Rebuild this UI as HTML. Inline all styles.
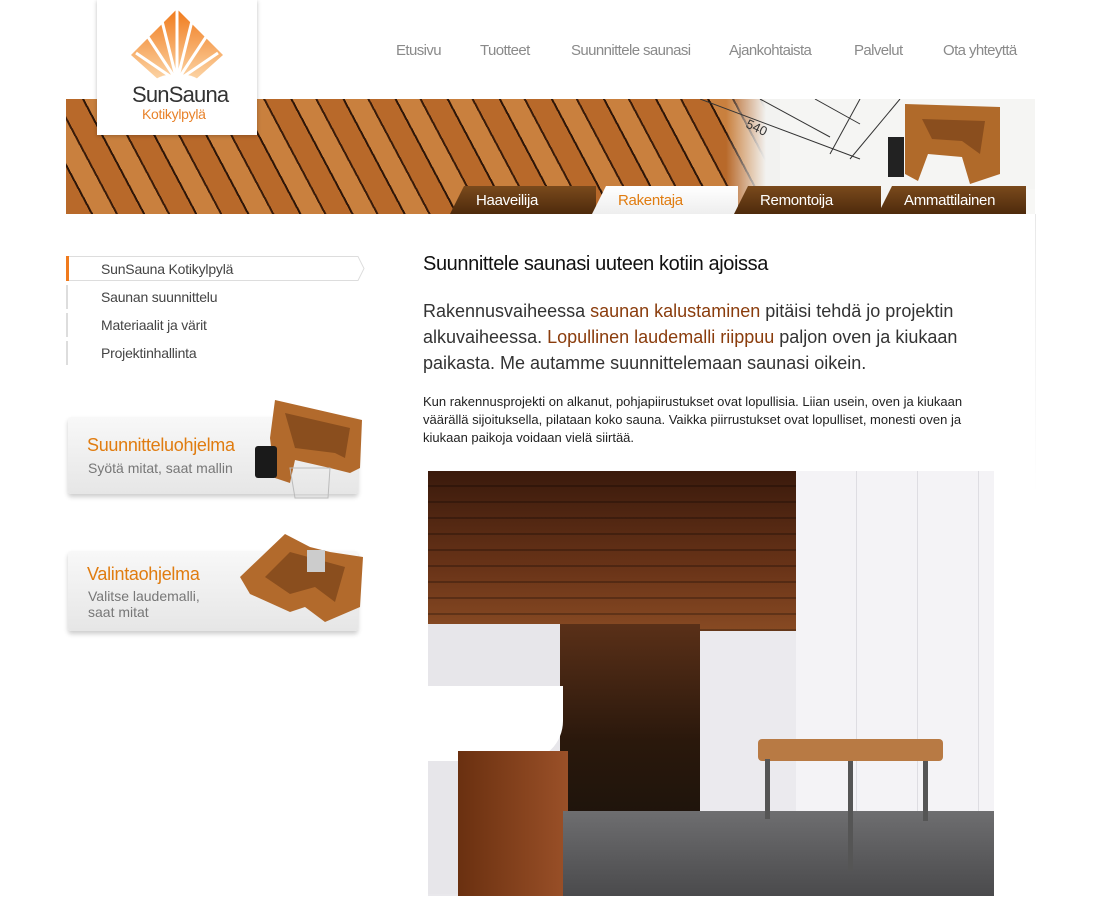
<!DOCTYPE html>
<html><head><meta charset="utf-8"><style>
*{margin:0;padding:0;box-sizing:border-box}
body{width:1093px;height:916px;background:#fff;position:relative;overflow:hidden;font-family:"Liberation Sans",sans-serif}
.abs{position:absolute}
.nav{top:42px;font-size:15px;color:#8a8a8a;letter-spacing:-0.6px}
.banner{left:66px;top:99px;width:969px;height:115px;overflow:hidden;
background:linear-gradient(90deg,rgba(0,0,0,0) 0,rgba(0,0,0,0) 660px,#f2f2f0 700px,#f7f7f5 100%),
repeating-linear-gradient(62deg,#b8692a 0 22px,#2e1608 22px 24px,#c9803e 24px 44px,#3a1c0a 44px 46px);}
.tab{top:186px;height:28px;color:#fff;font-size:15px;padding:6px 0 0 26px;letter-spacing:-0.3px;background:linear-gradient(#7a4a1c,#4e2a0c);clip-path:polygon(14px 0,100% 0,100% 100%,0 100%)}
.side{left:66px;width:2px;background:#ddd}
.si{left:101px;font-size:14px;color:#444;letter-spacing:-0.2px}
.promo{left:68px;width:290px;border-radius:3px;background:linear-gradient(#f8f8f8,#e6e6e6);box-shadow:0 3px 5px rgba(0,0,0,.2)}
</style></head><body>
<div class="abs banner"></div>
<div class="abs" style="left:780px;top:99px;width:255px;height:90px;background:#f5f5f3"></div>
<svg class="abs" style="left:700px;top:99px" width="335" height="90"><g stroke="#333" fill="none" stroke-width="1"><line x1="0" y1="0" x2="160" y2="60"/><line x1="60" y1="0" x2="130" y2="38"/><line x1="115" y1="0" x2="160" y2="25"/><line x1="160" y1="0" x2="130" y2="55"/><line x1="200" y1="0" x2="150" y2="60"/></g><text x="45" y="28" transform="rotate(25 45 28)" font-size="13" fill="#333" font-family="Liberation Sans">540</text>
<path d="M205 5 L300 8 L300 75 L270 85 L262 58 L228 55 L218 82 L205 75Z" fill="#b06a2a"/><path d="M222 20 L285 22 L280 55 L262 42 L232 40Z" fill="#8a4e1e"/><rect x="188" y="38" width="16" height="40" fill="#222"/></svg>
<div class="abs tab" style="left:450px;width:146px">Haaveilija</div>
<div class="abs tab" style="left:592px;width:146px;background:linear-gradient(#fff,#eee);color:#e07c10">Rakentaja</div>
<div class="abs tab" style="left:734px;width:147px">Remontoija</div>
<div class="abs tab" style="left:878px;width:148px">Ammattilainen</div>
<div class="abs" style="left:97px;top:0;width:160px;height:135px;background:#fff;box-shadow:0 1px 4px rgba(0,0,0,.25)"></div>
<svg class="abs" style="left:130px;top:9px" width="94" height="75"><defs><linearGradient id="g" x1="0" y1="0" x2="0" y2="1"><stop offset="0" stop-color="#f07a1c"/><stop offset="1" stop-color="#fcd6a8"/></linearGradient></defs>
<polygon points="47,0 93,46 64,72 47,62 30,72 1,46" fill="url(#g)"/><g stroke="#fff" stroke-width="3"><line x1="47" y1="72" x2="47" y2="0"/><line x1="47" y1="72" x2="32" y2="12"/><line x1="47" y1="72" x2="62" y2="12"/><line x1="47" y1="72" x2="18" y2="28"/><line x1="47" y1="72" x2="76" y2="28"/><line x1="47" y1="72" x2="6" y2="44"/><line x1="47" y1="72" x2="88" y2="44"/></g><ellipse cx="47" cy="75" rx="24" ry="10" fill="#fff"/></svg>
<div class="abs" style="left:132px;top:82px;font-size:22px;color:#333;letter-spacing:-0.8px">SunSauna</div>
<div class="abs" style="left:142px;top:106px;font-size:14px;color:#e8822a;letter-spacing:-0.3px">Kotikylpylä</div>
<div class="abs nav" style="left:396px">Etusivu</div>
<div class="abs nav" style="left:480px">Tuotteet</div>
<div class="abs nav" style="left:571px">Suunnittele saunasi</div>
<div class="abs nav" style="left:729px">Ajankohtaista</div>
<div class="abs nav" style="left:854px">Palvelut</div>
<div class="abs nav" style="left:943px">Ota yhteyttä</div>
<div class="abs" style="left:1035px;top:214px;width:1px;height:280px;background:linear-gradient(#e8e8e8,#fff)"></div>
<svg class="abs" style="left:66px;top:256px" width="300" height="26"><path d="M0 0.5H292L298 12.5L292 24.5H0" fill="#fff" stroke="#ddd"/><rect width="3" height="25" fill="#f07a1c"/></svg>
<div class="abs side" style="top:285px;height:24px"></div>
<div class="abs side" style="top:313px;height:24px"></div>
<div class="abs side" style="top:341px;height:24px"></div>
<div class="abs si" style="top:261px">SunSauna Kotikylpylä</div>
<div class="abs si" style="top:289px">Saunan suunnittelu</div>
<div class="abs si" style="top:317px">Materiaalit ja värit</div>
<div class="abs si" style="top:345px">Projektinhallinta</div>
<div class="abs promo" style="top:417px;height:77px"></div>
<div class="abs" style="left:87px;top:435px;font-size:18px;color:#e07c10;letter-spacing:-0.3px">Suunnitteluohjelma</div>
<div class="abs" style="left:88px;top:460px;font-size:14px;color:#777">Syötä mitat, saat mallin</div>
<svg class="abs" style="left:250px;top:398px" width="120" height="115"><path d="M25 2L112 22L110 70L100 75L80 70L45 62L40 85L25 80L20 40Z" fill="#b26a2c"/><path d="M35 15L100 30L95 60L85 55L45 50Z" fill="#8a4e1e"/><path d="M40 70 L80 70 L78 100 L45 100Z" fill="none" stroke="#bbb"/><rect x="5" y="48" width="22" height="32" rx="3" fill="#1a1a1a"/></svg>
<div class="abs promo" style="top:551px;height:80px"></div>
<div class="abs" style="left:87px;top:564px;font-size:18px;color:#e07c10;letter-spacing:-0.3px">Valintaohjelma</div>
<div class="abs" style="left:88px;top:588px;font-size:14px;color:#777;line-height:16px">Valitse laudemalli,<br>saat mitat</div>
<svg class="abs" style="left:235px;top:532px" width="135" height="120"><path d="M5 45L50 2L75 15L95 20L128 25L125 75L90 90L70 75L55 80L15 62Z" fill="#b26a2c"/><path d="M30 45L55 20L110 35L100 70L80 55L55 62Z" fill="#8a4e1e"/><rect x="72" y="18" width="18" height="22" fill="#ccc"/></svg>
<div class="abs" style="left:423px;top:253px;font-size:20px;color:#111;letter-spacing:-0.4px">Suunnittele saunasi uuteen kotiin ajoissa</div>
<div class="abs" style="left:423px;top:298px;width:560px;font-size:18px;line-height:26px;color:#333">Rakennusvaiheessa <span style="color:#8a3c0c">saunan kalustaminen</span> pitäisi tehdä jo projektin alkuvaiheessa. <span style="color:#8a3c0c">Lopullinen laudemalli riippuu</span> paljon oven ja kiukaan paikasta. Me autamme suunnittelemaan saunasi oikein.</div>
<div class="abs" style="left:423px;top:393px;width:560px;font-size:13px;line-height:18px;color:#222">Kun rakennusprojekti on alkanut, pohjapiirustukset ovat lopullisia. Liian usein, oven ja kiukaan väärällä sijoituksella, pilataan koko sauna. Vaikka piirrustukset ovat lopulliset, monesti oven ja kiukaan paikoja voidaan vielä siirtää.</div>
<div class="abs" style="left:428px;top:471px;width:566px;height:425px;overflow:hidden;background:#e9e8ec">
 <div class="abs" style="left:368px;top:0;width:198px;height:425px;background:repeating-linear-gradient(90deg,#f4f3f6 0 60px,#dedde2 60px 61px),#eee"></div>
 <div class="abs" style="left:0;top:0;width:368px;height:165px;background:linear-gradient(#3a1a0c,#6a3418 60%,#8a4c24)"></div>
 <div class="abs" style="left:0;top:0;width:368px;height:165px;background:repeating-linear-gradient(180deg,transparent 0 14px,rgba(0,0,0,.25) 14px 16px)"></div>
 <div class="abs" style="left:0;top:153px;width:132px;height:270px;background:#e7e6ea"></div>
 <div class="abs" style="left:132px;top:153px;width:140px;height:195px;background:linear-gradient(#5a3018,#2a180c 60%,#1e140c)"></div>
 <div class="abs" style="left:272px;top:160px;width:96px;height:190px;background:#ebeaee"></div>
 <div class="abs" style="left:0;top:215px;width:135px;height:75px;background:#fff;border-radius:0 0 40px 0"></div>
 <div class="abs" style="left:30px;top:280px;width:110px;height:145px;background:linear-gradient(90deg,#6a3010,#9a5028)"></div>
 <div class="abs" style="left:135px;top:340px;width:431px;height:85px;background:linear-gradient(#6e6e70,#4a4a4c)"></div>
 <div class="abs" style="left:330px;top:268px;width:185px;height:22px;background:#b87a44;border-radius:4px"></div>
 <div class="abs" style="left:337px;top:288px;width:5px;height:60px;background:#555"></div>
 <div class="abs" style="left:420px;top:290px;width:5px;height:110px;background:#555"></div>
 <div class="abs" style="left:495px;top:290px;width:5px;height:60px;background:#555"></div>
</div>
</body></html>
